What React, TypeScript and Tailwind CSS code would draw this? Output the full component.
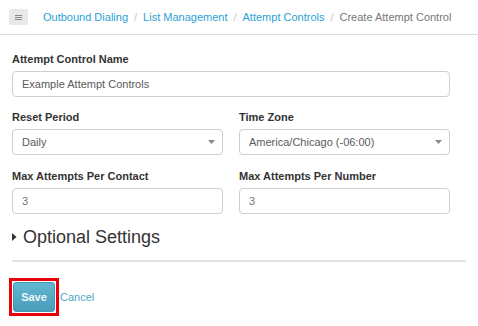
import React from "react";

const font = { fontFamily: '"Liberation Sans", Arial, Helvetica, sans-serif' };

function Caret() {
  return (
    <svg width="7" height="4" viewBox="0 0 7 4" className="shrink-0">
      <path d="M0 0 L7 0 L3.5 4 Z" fill="#8a8a8a" />
    </svg>
  );
}

function Label({ children }: { children: React.ReactNode }) {
  return (
    <div className="text-[11px] leading-[14px] font-bold text-[#333] mb-[5px]">{children}</div>
  );
}

function Field({ value, light }: { value: string; light?: boolean }) {
  return (
    <div
      className={
        "h-[26px] border border-[#cfcfcf] rounded-[4px] flex items-center pl-[9px] text-[11px] bg-white " +
        (light ? "text-[#777]" : "text-[#5a5a5a]")
      }
    >
      {value}
    </div>
  );
}

function Select({ value }: { value: string }) {
  return (
    <div className="h-[26px] border border-[#cfcfcf] rounded-[4px] flex items-center justify-between pl-[9px] pr-[7px] text-[11px] text-[#5a5a5a] bg-white">
      <span>{value}</span>
      <Caret />
    </div>
  );
}

export default function App() {
  return (
    <div className="w-[478px] h-[326px] bg-white overflow-hidden" style={font}>
      <div className="h-[35px] border-b border-[#dcdcdc] flex items-start">
        <div className="ml-[9px] mt-[9px] w-[19px] h-[16px] bg-[#e8e8e8] rounded-[2px] flex flex-col items-center justify-center gap-[1px]">
          <div className="w-[7px] h-[1px] bg-[#888]" />
          <div className="w-[7px] h-[1px] bg-[#888]" />
          <div className="w-[7px] h-[1px] bg-[#888]" />
        </div>
        <div className="ml-[15px] mt-[10px] flex items-center text-[11px] leading-[14px]">
          <span className="text-[#2b9fd4]">Outbound Dialing</span>
          <span className="text-[#c8c8c8] mx-[6px]">/</span>
          <span className="text-[#2b9fd4]">List Management</span>
          <span className="text-[#c8c8c8] mx-[6px]">/</span>
          <span className="text-[#2b9fd4]">Attempt Controls</span>
          <span className="text-[#c8c8c8] mx-[6px]">/</span>
          <span className="text-[#777]">Create Attempt Control</span>
        </div>
      </div>
      <div className="px-3">
        <div className="mr-4">
          <div className="mt-[17px]">
            <Label>Attempt Control Name</Label>
            <Field value="Example Attempt Controls" />
          </div>
          <div className="mt-[13px] grid grid-cols-2 gap-4">
            <div>
              <Label>Reset Period</Label>
              <Select value="Daily" />
            </div>
            <div>
              <Label>Time Zone</Label>
              <Select value="America/Chicago (-06:00)" />
            </div>
          </div>
          <div className="mt-[14px] grid grid-cols-2 gap-4">
            <div>
              <Label>Max Attempts Per Contact</Label>
              <Field value="3" light />
            </div>
            <div>
              <Label>Max Attempts Per Number</Label>
              <Field value="3" light />
            </div>
          </div>
        </div>
        <div className="mt-[12px] flex items-center h-[22px]">
          <svg width="5" height="8" viewBox="0 0 5 8" className="mr-[6px]">
            <path d="M0 0 L4.5 4 L0 8 Z" fill="#333" />
          </svg>
          <span className="text-[18px] leading-[22px] text-[#333]">Optional Settings</span>
        </div>
        <div className="mt-[12px] h-[2px] bg-[#e3e3e3]" />
      </div>
      <div className="mt-[16px] ml-[9px] flex items-center">
        <div className="border-[3px] border-[#e8000b] p-px">
          <div className="w-[42px] h-[30px] rounded-[3px] bg-gradient-to-b from-[#62b7d2] to-[#4a9dba] border border-[#4596b2] flex items-center justify-center text-[11px] font-bold text-[#eef8fb]">
            Save
          </div>
        </div>
        <span className="ml-px text-[11px] text-[#4fa8c8]">Cancel</span>
      </div>
    </div>
  );
}
